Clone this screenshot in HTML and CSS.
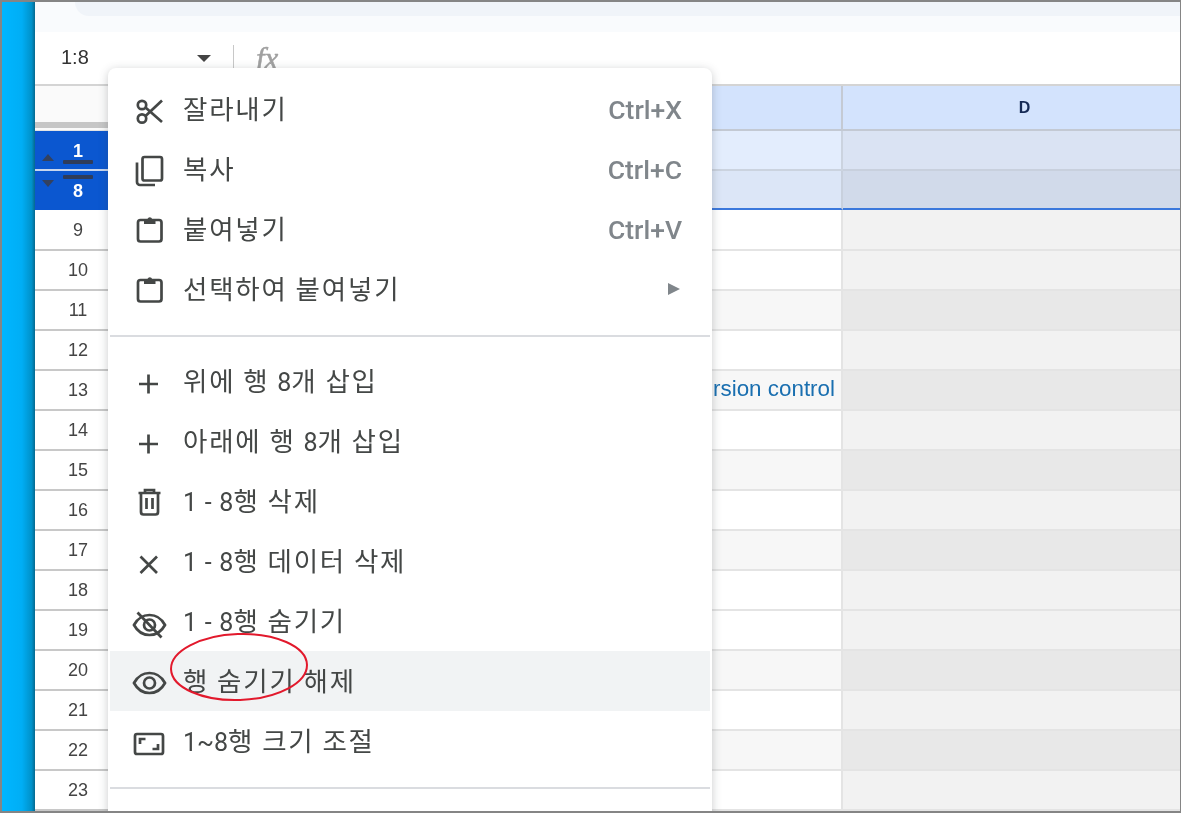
FILE: index.html
```html
<!DOCTYPE html>
<html lang="ko">
<head>
<meta charset="utf-8">
<title>행 숨기기 해제</title>
<link rel="stylesheet" href="styles.css">
</head>
<body>
<div class="frame">
  <div class="side"></div>
  <main class="sheet">
    <div class="topband"><div class="pill"></div></div>
    <div class="formula">
      <span class="namebox">1:8</span>
      <span class="caret"></span>
      <span class="fdiv"></span>
      <span class="fx">fx</span>
    </div>
    <div class="grid">
      <div class="corner"><span class="freeze"></span></div>
      <div class="colhead"></div>
      <div class="colhead colhead-d">D</div>

      <div class="rh rh-sel rh-first"><span class="arrow-up"></span><b>1</b><i class="dash"></i></div>
      <div class="c sel1"></div><div class="c sel1d"></div>
      <div class="rh rh-sel rh-last"><span class="arrow-down"></span><i class="dash"></i><b>8</b></div>
      <div class="c sel2"></div><div class="c sel2d"></div>

      <div class="rh">9</div><div class="c"></div><div class="c d"></div>
      <div class="rh">10</div><div class="c"></div><div class="c d"></div>
      <div class="rh">11</div><div class="c alt"></div><div class="c d alt"></div>
      <div class="rh">12</div><div class="c"></div><div class="c d"></div>
      <div class="rh">13</div><div class="c alt link">version control</div><div class="c d alt"></div>
      <div class="rh">14</div><div class="c"></div><div class="c d"></div>
      <div class="rh">15</div><div class="c alt"></div><div class="c d alt"></div>
      <div class="rh">16</div><div class="c"></div><div class="c d"></div>
      <div class="rh">17</div><div class="c alt"></div><div class="c d alt"></div>
      <div class="rh">18</div><div class="c"></div><div class="c d"></div>
      <div class="rh">19</div><div class="c"></div><div class="c d"></div>
      <div class="rh">20</div><div class="c alt"></div><div class="c d alt"></div>
      <div class="rh">21</div><div class="c"></div><div class="c d"></div>
      <div class="rh">22</div><div class="c alt"></div><div class="c d alt"></div>
      <div class="rh">23</div><div class="c"></div><div class="c d"></div>
    </div>

    <nav class="menu">
      <div class="item">
        <svg class="ico" viewBox="0 0 36 36"><circle cx="11" cy="14" r="4.200"/><circle cx="11" cy="27.500" r="4.200"/><path d="M14.500 16.500 31 31M14.500 25 31 9.500"/></svg>
        <span class="label">잘라내기</span><span class="key">Ctrl+X</span>
      </div>
      <div class="item">
        <svg class="ico" viewBox="0 0 36 36"><rect x="11.500" y="6" width="19.500" height="23.500" rx="2"/><path d="M6 11.500V31a3 3 0 0 0 3 3h15"/></svg>
        <span class="label">복사</span><span class="key">Ctrl+C</span>
      </div>
      <div class="item">
        <svg class="ico" viewBox="0 0 36 36"><rect x="7" y="9" width="23.500" height="21.500" rx="2.500"/><path class="solid" d="M13 8h3.500a2.400 2.400 0 0 1 4.600 0h3.400v5H13z"/></svg>
        <span class="label">붙여넣기</span><span class="key">Ctrl+V</span>
      </div>
      <div class="item">
        <svg class="ico" viewBox="0 0 36 36"><rect x="7" y="9" width="23.500" height="21.500" rx="2.500"/><path class="solid" d="M13 8h3.500a2.400 2.400 0 0 1 4.600 0h3.400v5H13z"/></svg>
        <span class="label">선택하여 붙여넣기</span><span class="submenu"></span>
      </div>
      <hr class="sep sep-a">
      <div class="item">
        <svg class="ico" viewBox="0 0 36 36"><path d="M17.500 11.500v19M8 21h19"/></svg>
        <span class="label">위에 행 <span class="num">8</span>개 삽입</span>
      </div>
      <div class="item">
        <svg class="ico" viewBox="0 0 36 36"><path d="M17.500 11.500v19M8 21h19"/></svg>
        <span class="label">아래에 행 <span class="num">8</span>개 삽입</span>
      </div>
      <div class="item">
        <svg class="ico" viewBox="0 0 36 36"><path d="M7.500 10h22M14 10V7h9v3M10 10v19a2.500 2.500 0 0 0 2.500 2.500h12A2.500 2.500 0 0 0 27 29V10M15.500 15v11M21.500 15v11"/></svg>
        <span class="label"><span class="num">1 - 8</span>행 삭제</span>
      </div>
      <div class="item">
        <svg class="ico" viewBox="0 0 36 36"><path d="M9.500 13.500 26 30M26 13.500 9.500 30"/></svg>
        <span class="label"><span class="num">1 - 8</span>행 데이터 삭제</span>
      </div>
      <div class="item">
        <svg class="ico" viewBox="0 0 36 36"><path d="M3 22c3.500-6.500 9-10 15.500-10S30.500 15.500 34 22c-3.500 6.500-9 10-15.500 10S6.500 28.500 3 22z"/><circle cx="18.500" cy="22" r="5.500"/><path d="M6.500 9.500 30.500 34.500"/></svg>
        <span class="label"><span class="num">1 - 8</span>행 숨기기</span>
      </div>
      <div class="item hover">
        <svg class="ico" viewBox="0 0 36 36"><path d="M3 20c3.500-6.500 9-10 15.500-10S30.500 13.500 34 20c-3.500 6.500-9 10-15.500 10S6.500 26.500 3 20z"/><circle cx="18.500" cy="20" r="5.500"/></svg>
        <span class="label">행 숨기기 해제</span>
      </div>
      <div class="item">
        <svg class="ico" viewBox="0 0 36 36"><rect x="4" y="11" width="28" height="20" rx="2"/><path d="M9 21v-5h5.500M27 21v5h-5.500"/></svg>
        <span class="label"><span class="num">1~8</span>행 크기 조절</span>
      </div>
      <hr class="sep sep-b">
    </nav>

    <svg class="circle" viewBox="0 0 142 72"><ellipse cx="71" cy="36" rx="68" ry="33" transform="rotate(-2 71 36)"/></svg>
  </main>
</div>
</body>
</html>
```
FILE: styles.css
```css
* { box-sizing: border-box; }
html, body { margin: 0; padding: 0; background: #fff; }
body { width: 1181px; height: 813px; overflow: hidden; font-family: "Liberation Sans", Arial, sans-serif; }

.frame {
  width: 1181px;
  height: 813px;
  display: flex;
  border: solid #858585;
  border-width: 2px 1px 2px 2px;
  overflow: hidden;
  filter: blur(0.5px);
}
.side {
  width: 33px;
  flex: none;
  background: linear-gradient(90deg, #00b6ff 0, #00aef5 60%, #0091c9 90%, #06688e 100%);
}
.sheet { position: relative; flex: 1; min-width: 0; overflow: hidden; background: #fff; }

.topband { height: 30px; background: #f9fbfd; padding-left: 40px; }
.pill { height: 14px; background: #f0f4f9; border-bottom-left-radius: 18px; }

.formula {
  height: 54px;
  display: flex;
  align-items: center;
  background: #fff;
  border-bottom: 2px solid #d4d4d4;
}
.namebox { width: 162px; padding-left: 26px; font-size: 20px; color: #333; margin-top: -2px; flex: none; }
.caret { width: 0; height: 0; border: 7px solid transparent; border-top: 7px solid #444; border-bottom: 0; flex: none; }
.fdiv { width: 1px; height: 27px; background: #c8c8c8; margin-left: 22px; flex: none; }
.fx { margin-left: 22px; font-family: "Liberation Serif", serif; font-style: italic; font-size: 31px; line-height: 1; color: #a0a0a0; -webkit-text-stroke: 0.5px #a0a0a0; }

.grid {
  display: grid;
  grid-template-columns: 86px 722px 337px;
  grid-template-rows: 45px 40px 39px 41px repeat(14, 40px);
}
.corner { background: #fafafa; display: flex; flex-direction: column; justify-content: flex-end; padding-bottom: 2px; border-bottom: 1px solid #e4e4e4; }
.freeze { display: block; height: 6px; background: #c6c6c6; }
.colhead { background: #d3e3fd; border-right: 2px solid #c4cad4; border-bottom: 2px solid #c3c9d3; }
.colhead-d { border-right: 0; display: flex; align-items: center; justify-content: center; padding: 0 0 0 26px; font-weight: bold; font-size: 16px; color: #152a55; }

.rh {
  display: flex;
  align-items: center;
  justify-content: center;
  padding-top: 1px;
  font-size: 18px;
  color: #444;
  background: #fff;
  border-bottom: 2px solid #c8c8c8;
}
.rh-sel {
  position: relative;
  flex-direction: column;
  background: #0b57d0;
  color: #fff;
  font-size: 18px;
  padding-top: 0;
  border-bottom: 0;
}
.rh-sel b { display: block; line-height: 16px; }
.rh-first { border-bottom: 2px solid #c8d6ee; justify-content: flex-end; padding-bottom: 5px; }
.rh-last { justify-content: flex-start; padding-top: 4px; }
.dash { display: block; width: 30px; height: 4px; background: #2e3c5b; border-radius: 1px; }
.rh-first .dash { margin-top: 1px; }
.rh-last .dash { margin-bottom: 4px; }
.arrow-up, .arrow-down { position: absolute; left: 7px; width: 0; height: 0; border: 6px solid transparent; }
.arrow-up { top: 23px; border-top: 0; border-bottom: 7px solid #33415f; }
.arrow-down { top: 9px; border-bottom: 0; border-top: 7px solid #33415f; }

.c { background: #fff; border-right: 2px solid #e4e4e4; border-bottom: 2px solid #e4e4e4; }
.c.alt { background: #f7f7f7; }
.c.d { background: #f2f2f2; border-right: 0; }
.c.d.alt { background: #e8e8e8; }
.sel1 { background: #e3edfd; border-color: #cbd3df; }
.sel1d { background: #dae3f3; border-color: #c8d0dd; border-right: 0; }
.sel2 { background: #dce6f7; border-right-color: #c8d0dd; border-bottom-color: #3b78dc; }
.sel2d { background: #d1daea; border-right: 0; border-bottom-color: #3b78dc; }
.link { display: flex; align-items: center; justify-content: flex-end; padding: 0 6px 2px 0; font-size: 22.4px; color: #1a6fb0; white-space: nowrap; }

.menu {
  position: absolute;
  left: 73px;
  top: 66px;
  width: 604px;
  padding: 11px 2px 60px;
  background: #fff;
  border-radius: 8px;
  box-shadow: 0 2px 10px rgba(60, 64, 67, .28);
}
.item {
  height: 60px;
  display: flex;
  align-items: center;
  padding: 0 28px 0 21px;
  font-family: Roboto, "Noto Sans CJK KR", sans-serif;
  color: #444746;
}
.item.hover { background: #f1f3f4; }
.ico {
  width: 36px;
  height: 36px;
  flex: none;
  fill: none;
  stroke: #444746;
  stroke-width: 2.700;
}
.ico .solid { fill: #444746; stroke: none; }
.label { margin-left: 16px; padding-top: 2px; font-size: 26.5px; letter-spacing: 1.8px; word-spacing: -0.5px; line-height: 1; white-space: nowrap; }
.num { font-size: 25px; letter-spacing: 0; word-spacing: 1.5px; }
.key { margin-left: auto; font-family: Roboto, "Liberation Sans", sans-serif; font-weight: 500; font-size: 26.5px; color: #80868b; }
.submenu { margin-left: auto; margin-right: 2px; width: 0; height: 0; border: 6px solid transparent; border-left: 12px solid #80868b; border-right: 0; }
.sep { height: 2px; border: 0; margin: 0; background: #dadce0; }
.sep-a { margin: 16px 0 14px; }
.sep-b { margin: 16px 0 0; }

.circle {
  position: absolute;
  left: 133px;
  top: 629px;
  width: 142px;
  height: 72px;
  fill: none;
  stroke: #e2192c;
  stroke-width: 2;
  overflow: visible;
}
```
